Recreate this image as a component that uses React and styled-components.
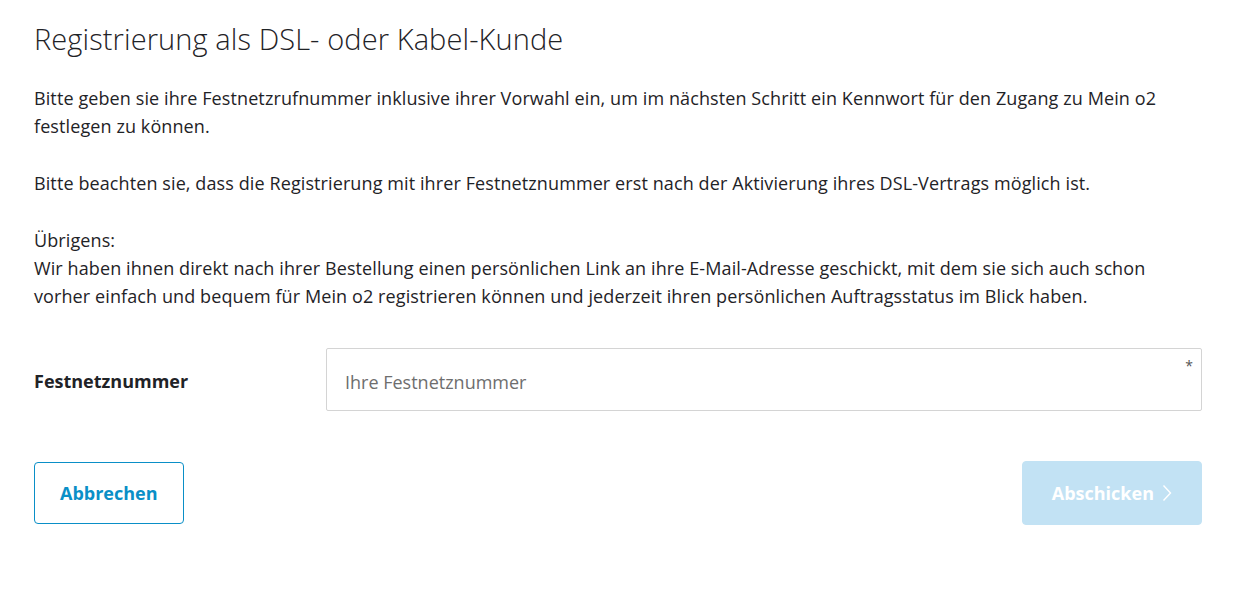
import styled, { createGlobalStyle } from "styled-components";

const GlobalStyle = createGlobalStyle`
  body {
    margin: 0;
    background: #ffffff;
    font-family: "Open Sans", "Noto Sans", sans-serif;
    color: #1f2327;
  }
`;

const Page = styled.main`
  width: 1168px;
  padding: 20px 0 0 34px;
`;

const Title = styled.h1`
  margin: 0 0 26px 0;
  font-size: 29px;
  font-weight: 300;
  line-height: 38px;
  letter-spacing: 0.1px;
  color: #1f2327;
`;

const Text = styled.p`
  margin: 0 0 29px 0;
  font-size: 18px;
  font-weight: 400;
  line-height: 28px;
  letter-spacing: 0.1px;
`;

const FieldRow = styled.div`
  display: flex;
  align-items: center;
  margin-top: 38px;
`;

const Label = styled.label`
  width: 292px;
  padding-top: 3px;
  font-size: 18px;
  font-weight: 700;
`;

const InputBox = styled.div`
  position: relative;
  flex: 1;
`;

const Input = styled.input`
  box-sizing: border-box;
  width: 100%;
  height: 63px;
  border: 1px solid #d4d4d4;
  border-radius: 2px;
  padding: 4px 18px 0 18px;
  font-family: "Open Sans", "Noto Sans", sans-serif;
  font-size: 18px;
  color: #1f2327;
  outline: none;

  &::placeholder {
    color: #6e6e6e;
  }
`;

const Required = styled.span`
  position: absolute;
  top: 8px;
  right: 9px;
  font-size: 14px;
  color: #555;
`;

const Actions = styled.div`
  display: flex;
  justify-content: space-between;
  align-items: center;
  margin-top: 50px;
`;

const Button = styled.button`
  box-sizing: border-box;
  display: flex;
  align-items: center;
  justify-content: center;
  gap: 8px;
  height: ${(p) => (p.$primary ? "64px" : "62px")};
  padding: 0 ${(p) => (p.$primary ? "29px" : "25px")};
  border-radius: 4px;
  border: 1px solid ${(p) => (p.$primary ? "#c2e2f4" : "#0a8fc7")};
  background: ${(p) => (p.$primary ? "#c2e2f4" : "#ffffff")};
  color: ${(p) => (p.$primary ? "#ffffff" : "#0a8fc7")};
  font-family: "Open Sans", "Noto Sans", sans-serif;
  font-size: 18px;
  font-weight: 700;
  cursor: pointer;
`;

const Chevron = () => (
  <svg width="10" height="18" viewBox="0 0 10 18" fill="none">
    <path d="M1.5 1.5 L8.5 9 L1.5 16.5" stroke="#ffffff" strokeWidth="1.4" />
  </svg>
);

export default function App() {
  return (
    <>
      <GlobalStyle />
      <Page>
        <Title>Registrierung als DSL- oder Kabel-Kunde</Title>
        <Text>
          Bitte geben sie ihre Festnetzrufnummer inklusive ihrer Vorwahl ein, um im nächsten
          Schritt ein Kennwort für den Zugang zu Mein o2 festlegen zu können.
        </Text>
        <Text>
          Bitte beachten sie, dass die Registrierung mit ihrer Festnetznummer erst nach der
          Aktivierung ihres DSL-Vertrags möglich ist.
        </Text>
        <Text>
          Übrigens:
          <br />
          Wir haben ihnen direkt nach ihrer Bestellung einen persönlichen Link an ihre
          E-Mail-Adresse geschickt, mit dem sie sich auch schon vorher einfach und bequem für
          Mein o2 registrieren können und jederzeit ihren persönlichen Auftragsstatus im Blick
          haben.
        </Text>
        <FieldRow>
          <Label htmlFor="festnetz">Festnetznummer</Label>
          <InputBox>
            <Input id="festnetz" placeholder="Ihre Festnetznummer" />
            <Required>*</Required>
          </InputBox>
        </FieldRow>
        <Actions>
          <Button>Abbrechen</Button>
          <Button $primary>
            Abschicken
            <Chevron />
          </Button>
        </Actions>
      </Page>
    </>
  );
}
